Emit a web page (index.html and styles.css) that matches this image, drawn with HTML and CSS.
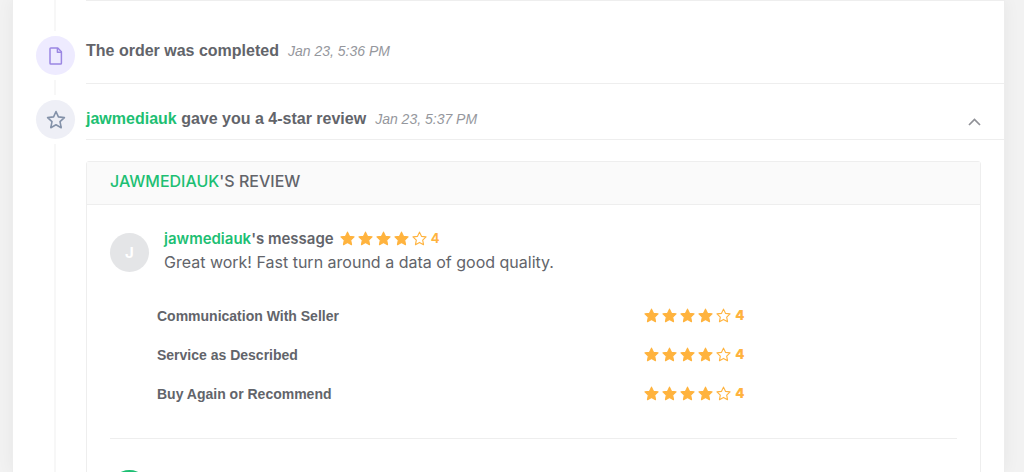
FILE: index.html
```html
<!DOCTYPE html>
<html lang="en">
<head>
<meta charset="utf-8">
<meta name="viewport" content="width=device-width, initial-scale=1">
<title>Order activity</title>
<link rel="stylesheet" href="styles.css">
</head>
<body>
<svg class="defs" aria-hidden="true">
  <symbol id="star" viewBox="0 0 16 16"><path d="M8 1.2l2.1 4.5 4.9.6-3.6 3.4.9 4.9L8 12.2l-4.3 2.4.9-4.9L1 6.3l4.9-.6z" stroke="currentColor" stroke-width="1.2" stroke-linejoin="round"/></symbol>
</svg>
<main class="panel">
  <ol class="timeline">
    <li class="event">
      <span class="event-icon order">
        <svg width="14" height="18" viewBox="0 0 14 18" fill="none" stroke="currentColor" stroke-width="1.5" stroke-linejoin="round"><path d="M1.8 1h7l3.6 3.8v11.4q0 .8-.8.8H1.8q-.8 0-.8-.8V1.8Q1 1 1.8 1z"/><path d="M8.4 1v4.2h4"/></svg>
      </span>
      <div class="event-body">
        <div class="event-head tall">
          <h2 class="title">The order was completed</h2>
          <time class="date">Jan 23, 5:36 PM</time>
        </div>
      </div>
    </li>
    <li class="event">
      <span class="event-icon review">
        <svg width="20" height="20" viewBox="0 0 20 20" fill="none" stroke="currentColor" stroke-width="1.6" stroke-linejoin="round"><path d="M10 1.5l2.4 5.4 6 .7-4.4 4.1 1.2 6L10 14.8l-5.2 2.9 1.2-6-4.4-4.1 6-.7z"/></svg>
      </span>
      <div class="event-body">
        <div class="event-head">
          <h2 class="title"><a href="#jawmediauk">jawmediauk</a> gave you a 4-star review</h2>
          <time class="date">Jan 23, 5:37 PM</time>
          <button class="toggle" type="button" aria-label="Collapse review" aria-expanded="true">
            <svg width="13" height="8" viewBox="0 0 13 8" fill="none" stroke="currentColor" stroke-width="1.7"><path d="M1 7l5.5-5.5L12 7"/></svg>
          </button>
        </div>
        <section class="card">
          <h3 class="card-head"><a href="#jawmediauk">JAWMEDIAUK</a>'S REVIEW</h3>
          <div class="card-body">
            <div class="message">
              <span class="avatar">J</span>
              <div>
                <div class="author">
                  <h4 class="name"><a href="#jawmediauk">jawmediauk</a>'s message</h4>
                  <span class="rating"><svg><use href="#star"/></svg><svg><use href="#star"/></svg><svg><use href="#star"/></svg><svg><use href="#star"/></svg><svg class="empty"><use href="#star"/></svg><b>4</b></span>
                </div>
                <p class="text">Great work! Fast turn around a data of good quality.</p>
              </div>
            </div>
            <dl class="scores">
              <div class="score"><dt>Communication With Seller</dt><dd class="rating"><svg><use href="#star"/></svg><svg><use href="#star"/></svg><svg><use href="#star"/></svg><svg><use href="#star"/></svg><svg class="empty"><use href="#star"/></svg><b>4</b></dd></div>
              <div class="score"><dt>Service as Described</dt><dd class="rating"><svg><use href="#star"/></svg><svg><use href="#star"/></svg><svg><use href="#star"/></svg><svg><use href="#star"/></svg><svg class="empty"><use href="#star"/></svg><b>4</b></dd></div>
              <div class="score"><dt>Buy Again or Recommend</dt><dd class="rating"><svg><use href="#star"/></svg><svg><use href="#star"/></svg><svg><use href="#star"/></svg><svg><use href="#star"/></svg><svg class="empty"><use href="#star"/></svg><b>4</b></dd></div>
            </dl>
            <div class="reply"><span class="avatar seller"></span></div>
          </div>
        </section>
      </div>
    </li>
  </ol>
</main>
</body>
</html>
```
FILE: styles.css
```css
* { box-sizing: border-box; }
body {
  margin: 0;
  height: 100vh;
  overflow: hidden;
  padding: 0 19px 0 12px;
  background: #f2f2f2;
  color: #62646a;
  font-family: Inter, "Liberation Sans", sans-serif;
  font-size: 16px;
  line-height: 24px;
}
h2, h3, h4, p, ol, dl, dd { margin: 0; padding: 0; }
a { color: #1dbf73; text-decoration: none; }
.defs { position: absolute; width: 0; height: 0; }
.panel {
  height: 100%;
  overflow: hidden;
  padding-left: 23px;
  background: #fff;
  border: solid #ededed;
  border-width: 0 1px;
  box-shadow: 0 0 16px rgba(0, 0, 0, 0.05);
}
.timeline {
  position: relative;
  list-style: none;
}
.timeline::before {
  content: "";
  position: absolute;
  left: 18px;
  top: 0;
  bottom: 0;
  width: 2px;
  background: #f7f7f7;
}
.event {
  display: grid;
  grid-template-columns: 39px 1fr;
  column-gap: 11px;
}
.event:first-child .event-body { border-top: 1px solid #eee; }
.event-icon {
  position: relative;
  display: flex;
  align-items: center;
  justify-content: center;
  width: 39px;
  height: 39px;
  margin-top: 16px;
  border-radius: 50%;
  box-shadow: 0 0 0 5px #fff;
}
.event:first-child .event-icon { margin-top: 36px; }
.order { background: #eeebff; color: #9b87e3; }
.review { background: #eeeff6; color: #8492a9; }
.event-head {
  display: flex;
  align-items: center;
  gap: 9px;
  padding: 23px 23px 8px 0;
  border-bottom: 1px solid #eee;
}
.event-head.tall { padding: 38px 23px 20px 0; }
.title { font: bold 16px/24px "Liberation Sans", Arial, sans-serif; }
.date { font: italic 14px/24px "Liberation Sans", Arial, sans-serif; color: #95979d; }
.toggle {
  display: flex;
  margin-left: auto;
  padding: 6px 0 0;
  border: 0;
  background: none;
  color: #8f9096;
}
.card {
  margin: 21px 23px 0 0;
  border: 1px solid #eee;
  border-radius: 3px;
}
.card-head {
  padding: 7px 23px 11px;
  background: #fafafa;
  border-bottom: 1px solid #eee;
  font-size: 16px;
  font-weight: 500;
}
.card-body { padding: 22px 23px 0; }
.message { display: flex; gap: 15px; }
.avatar {
  display: flex;
  align-items: center;
  justify-content: center;
  width: 39px;
  height: 39px;
  margin-top: 6px;
  border-radius: 50%;
  background: #e4e5e7;
  color: #fff;
  font-size: 15px;
  font-weight: 700;
}
.author { display: flex; gap: 6px; }
.name { font-size: 15px; font-weight: 600; }
.text { line-height: 23px; }
.rating {
  display: flex;
  align-items: center;
  gap: 3px;
  height: 22px;
  color: #ffb33e;
  font-family: Inter, "Liberation Sans", sans-serif;
  font-size: 13px;
}
.rating svg { width: 15px; height: 15px; fill: currentColor; }
.rating .empty { fill: none; }
.rating b { margin-left: 1px; }
.scores {
  padding: 30px 47px 17px;
  border-bottom: 1px solid #eee;
}
.score {
  display: grid;
  grid-template-columns: 11fr 6fr;
  padding-bottom: 15px;
  font: bold 14px/24px "Liberation Sans", Arial, sans-serif;
}
.reply { padding-top: 25px; }
.reply .avatar { margin-top: 6px; }
.seller { background: #1dbf73; }
```
